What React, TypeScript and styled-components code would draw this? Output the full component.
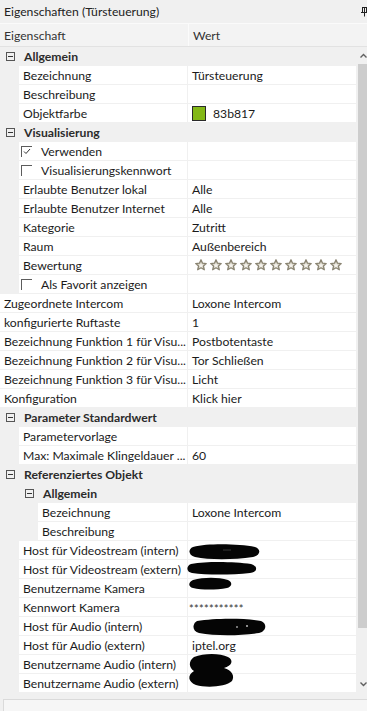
import React from "react";
import styled, { createGlobalStyle, css } from "styled-components";

const GlobalStyle = createGlobalStyle`
  html, body {
    margin: 0;
    padding: 0;
    background: #f0f0f0;
    overflow: hidden;
  }
  body {
    font-family: "Lato", "Noto Sans", sans-serif;
    font-size: 12.2px;
    color: #1b1b1b;
  }
`;

const ROW_H = 19;
const NAME_W = 188;

const Panel = styled.div`
  width: 367px;
  height: 711px;
  display: flex;
  flex-direction: column;
  background: #f0f0f0;
  overflow: hidden;
`;

const TitleBar = styled.div`
  height: 24px;
  display: flex;
  align-items: center;
  justify-content: space-between;
  padding-left: 4px;
  border-bottom: 1px solid #fafafa;
  box-sizing: border-box;
  color: #222;
`;

const HeaderRow = styled.div`
  height: 22px;
  display: flex;
  background: #f3f3f3;
  border-bottom: 1px solid #e2e2e2;
`;

const HeaderCell = styled.div<{ $w?: number }>`
  display: flex;
  align-items: center;
  padding-left: 4px;
  color: #333;
  ${(p) =>
    p.$w
      ? css`
          width: ${p.$w}px;
          box-sizing: border-box;
          border-right: 1px solid #fbfbfb;
        `
      : css`
          flex: 1;
        `}
`;

const Body = styled.div`
  display: flex;
  height: 646px;
`;

const Grid = styled.div`
  flex: 1;
  display: flex;
  flex-direction: column;
  background: #fff;
`;

const Row = styled.div<{ $group?: boolean }>`
  height: ${ROW_H}px;
  display: flex;
  background: ${(p) => (p.$group ? "#f0f0f0" : "#fff")};
`;

const Indent = styled.div<{ $w: number }>`
  width: ${(p) => p.$w}px;
  flex: none;
  background: #f0f0f0;
`;

const NameCell = styled.div<{ $w: number }>`
  width: ${(p) => p.$w}px;
  flex: none;
  box-sizing: border-box;
  display: flex;
  align-items: center;
  padding-left: 4px;
  gap: 9px;
  white-space: nowrap;
  overflow: hidden;
  border-bottom: 1px solid #f0f0f0;
  border-right: 1px solid #f0f0f0;
`;

const ValueCell = styled.div`
  flex: 1;
  display: flex;
  align-items: center;
  padding-left: 4px;
  gap: 7px;
  white-space: nowrap;
  position: relative;
  border-bottom: 1px solid #f0f0f0;
`;

const GroupCell = styled.div`
  flex: 1;
  display: flex;
  align-items: center;
  padding-left: 6px;
  gap: 9px;
  font-weight: 700;
  color: #2b2b2b;
`;

const Expander = styled.span`
  width: 7px;
  height: 7px;
  border: 1px solid #555;
  position: relative;
  flex: none;
  &::after {
    content: "";
    position: absolute;
    left: 1px;
    right: 1px;
    top: 3px;
    height: 1px;
    background: #333;
  }
`;

const Check = styled.span`
  width: 11px;
  height: 11px;
  margin-left: -2px;
  box-sizing: border-box;
  border-top: 1px solid #5c5c5c;
  border-left: 1px solid #5c5c5c;
  display: flex;
  align-items: center;
  justify-content: center;
  flex: none;
`;

const Swatch = styled.span<{ $color: string }>`
  width: 12px;
  height: 13px;
  background: ${(p) => p.$color};
  border: 1px solid #2a2a2a;
  flex: none;
`;

const Stars = styled.div`
  display: flex;
  gap: 3px;
  padding-left: 3px;
`;

const Secret = styled.span`
  font-size: 11px;
  letter-spacing: 0.3px;
  margin-left: -3px;
  padding-top: 2px;
  color: #333;
`;

const Redacted = styled.svg<{ $top: number; $left: number }>`
  position: absolute;
  z-index: 1;
  top: ${(p) => p.$top}px;
  left: ${(p) => p.$left}px;
  overflow: visible;
`;

const ScrollBar = styled.div`
  width: 9px;
  margin-left: 2px;
  display: flex;
  flex-direction: column;
  background: #f0f0f0;
`;

const ScrollArrow = styled.div`
  height: 17px;
  display: flex;
  align-items: center;
  padding-left: 2px;
`;

const Thumb = styled.div`
  height: 564px;
  background: #cdcdcd;
`;

const Track = styled.div`
  flex: 1;
`;

const Footer = styled.div`
  flex: 1;
  margin: 6px 0 0 3px;
  background: #f6f6f6;
  border-top: 1px solid #dadada;
  border-left: 1px solid #dadada;
`;

const Pin = () => (
  <svg width="7" height="10" viewBox="0 0 7 10" style={{ marginRight: -1 }}>
    <path d="M1 0.5h5M1.5 0.5v4.5M5.5 0.5v4.5M3.5 0.5v4.5M0 5.5h7M3.5 5.5v4" stroke="#222" strokeWidth="1" fill="none" />
  </svg>
);

const Star = () => (
  <svg width="12" height="12" viewBox="0 0 24 24">
    <path
      d="M12 1.5l3.1 6.9 7.4.7-5.6 5 1.7 7.4L12 17.6l-6.6 3.9 1.7-7.4-5.6-5 7.4-.7z"
      fill="#d6d1c4"
      stroke="#8a8472"
      strokeWidth="2.6"
      strokeLinejoin="round"
    />
    <path d="M12 8l1.5 3.2 3.5.4-2.7 2.4.8 3.4L12 15.6l-3.1 1.8.8-3.4-2.7-2.4 3.5-.4z" fill="#f4f2ec" />
  </svg>
);

const Chevron = ({ up }: { up?: boolean }) => (
  <svg width="7" height="5" viewBox="0 0 7 5">
    <path d={up ? "M0.5 4.5L3.5 1.5L6.5 4.5" : "M0.5 0.5L3.5 3.5L6.5 0.5"} stroke="#606060" strokeWidth="1.4" fill="none" />
  </svg>
);

const blobs: Record<string, { top: number; left: number; w: number; h: number; d: string }> = {
  v1: { top: 2, left: 1, w: 70, h: 16, d: "M4 4C20 0 50 1 66 4C72 6 72 12 64 14C44 17 20 17 6 14C-1 12 -1 6 4 4Z" },
  v2: { top: 2, left: -1, w: 70, h: 12, d: "M4 2C22 -1 48 0 64 2C71 4 71 10 63 11C44 13 20 13 5 11C-1 10 -1 4 4 2Z" },
  k1: { top: -1, left: 0, w: 44, h: 13, d: "M5 2C16 -1 30 -1 40 2C45 4 44 9 39 10C28 12 14 12 5 10C0 9 0 4 5 2Z" },
  a1: { top: 1, left: 5, w: 72, h: 17, d: "M4 3C22 0 52 0 68 3C74 5 74 13 66 15C46 18 22 18 6 15C-1 13 -1 6 4 3Z" },
  b1: { top: -2, left: 0, w: 46, h: 35, d: "M6 4C16 0 32 0 40 4C46 7 44 13 36 15C44 17 47 23 44 28C38 34 18 35 8 32C0 29 -1 22 6 18C1 15 0 8 6 4Z" },
};

const Blob = ({ id }: { id: string }) => {
  const b = blobs[id];
  return (
    <Redacted $top={b.top} $left={b.left} width={b.w} height={b.h} viewBox={`0 0 ${b.w} ${b.h}`}>
      <path d={b.d} fill="#050505" />
      {id === "a1" && (
        <>
          <circle cx="44" cy="9" r="1" fill="#999" />
          <circle cx="54" cy="8" r="1" fill="#bbb" />
        </>
      )}
      {id === "v1" && <path d="M34 7h8" stroke="#444" strokeWidth="0.8" />}
    </Redacted>
  );
};

type Item =
  | { kind: "group"; level: number; name: string }
  | { kind: "prop"; level: number; name: string; value?: React.ReactNode }
  | { kind: "check"; level: number; name: string; checked: boolean };

const items: Item[] = [
  { kind: "group", level: 0, name: "Allgemein" },
  { kind: "prop", level: 1, name: "Bezeichnung", value: "Türsteuerung" },
  { kind: "prop", level: 1, name: "Beschreibung" },
  {
    kind: "prop",
    level: 1,
    name: "Objektfarbe",
    value: (
      <>
        <Swatch $color="#83b817" />
        <span>83b817</span>
      </>
    ),
  },
  { kind: "group", level: 0, name: "Visualisierung" },
  { kind: "check", level: 1, name: "Verwenden", checked: true },
  { kind: "check", level: 1, name: "Visualisierungskennwort", checked: false },
  { kind: "prop", level: 1, name: "Erlaubte Benutzer lokal", value: "Alle" },
  { kind: "prop", level: 1, name: "Erlaubte Benutzer Internet", value: "Alle" },
  { kind: "prop", level: 1, name: "Kategorie", value: "Zutritt" },
  { kind: "prop", level: 1, name: "Raum", value: "Außenbereich" },
  {
    kind: "prop",
    level: 1,
    name: "Bewertung",
    value: (
      <Stars>
        {Array.from({ length: 10 }, (_, i) => (
          <Star key={i} />
        ))}
      </Stars>
    ),
  },
  { kind: "check", level: 1, name: "Als Favorit anzeigen", checked: false },
  { kind: "prop", level: 0, name: "Zugeordnete Intercom", value: "Loxone Intercom" },
  { kind: "prop", level: 0, name: "konfigurierte Ruftaste", value: "1" },
  { kind: "prop", level: 0, name: "Bezeichnung Funktion 1 für Visu...", value: "Postbotentaste" },
  { kind: "prop", level: 0, name: "Bezeichnung Funktion 2 für Visu...", value: "Tor Schließen" },
  { kind: "prop", level: 0, name: "Bezeichnung Funktion 3 für Visu...", value: "Licht" },
  { kind: "prop", level: 0, name: "Konfiguration", value: "Klick hier" },
  { kind: "group", level: 0, name: "Parameter Standardwert" },
  { kind: "prop", level: 1, name: "Parametervorlage" },
  { kind: "prop", level: 1, name: "Max: Maximale Klingeldauer ...", value: "60" },
  { kind: "group", level: 0, name: "Referenziertes Objekt" },
  { kind: "group", level: 1, name: "Allgemein" },
  { kind: "prop", level: 2, name: "Bezeichnung", value: "Loxone Intercom" },
  { kind: "prop", level: 2, name: "Beschreibung" },
  { kind: "prop", level: 1, name: "Host für Videostream (intern)", value: <Blob id="v1" /> },
  { kind: "prop", level: 1, name: "Host für Videostream (extern)", value: <Blob id="v2" /> },
  { kind: "prop", level: 1, name: "Benutzername Kamera", value: <Blob id="k1" /> },
  { kind: "prop", level: 1, name: "Kennwort Kamera", value: <Secret>***********</Secret> },
  { kind: "prop", level: 1, name: "Host für Audio (intern)", value: <Blob id="a1" /> },
  { kind: "prop", level: 1, name: "Host für Audio (extern)", value: "iptel.org" },
  { kind: "prop", level: 1, name: "Benutzername Audio (intern)", value: <Blob id="b1" /> },
  { kind: "prop", level: 1, name: "Benutzername Audio (extern)" },
];

const INDENT = 19;

function PropertyRow({ item }: { item: Item }) {
  const indent = item.level * INDENT;
  if (item.kind === "group") {
    return (
      <Row $group>
        {indent > 0 && <Indent $w={indent} />}
        <GroupCell>
          <Expander />
          <span>{item.name}</span>
        </GroupCell>
      </Row>
    );
  }
  return (
    <Row>
      {indent > 0 && <Indent $w={indent} />}
      <NameCell $w={NAME_W - indent}>
        {item.kind === "check" && (
          <Check>
            {item.checked && (
              <svg width="8" height="7" viewBox="0 0 8 7">
                <path d="M1 3.5L3 5.5L7 1" stroke="#333" strokeWidth="1" fill="none" />
              </svg>
            )}
          </Check>
        )}
        <span>{item.name}</span>
      </NameCell>
      <ValueCell>{item.kind === "prop" ? item.value : null}</ValueCell>
    </Row>
  );
}

export default function App() {
  return (
    <>
      <GlobalStyle />
      <Panel>
        <TitleBar>
          <span>Eigenschaften (Türsteuerung)</span>
          <Pin />
        </TitleBar>
        <HeaderRow>
          <HeaderCell $w={NAME_W + 1}>Eigenschaft</HeaderCell>
          <HeaderCell>Wert</HeaderCell>
        </HeaderRow>
        <Body>
          <Grid>
            {items.map((item, i) => (
              <PropertyRow key={i} item={item} />
            ))}
          </Grid>
          <ScrollBar>
            <ScrollArrow>
              <Chevron up />
            </ScrollArrow>
            <Thumb />
            <Track />
            <ScrollArrow>
              <Chevron />
            </ScrollArrow>
          </ScrollBar>
        </Body>
        <Footer />
      </Panel>
    </>
  );
}
